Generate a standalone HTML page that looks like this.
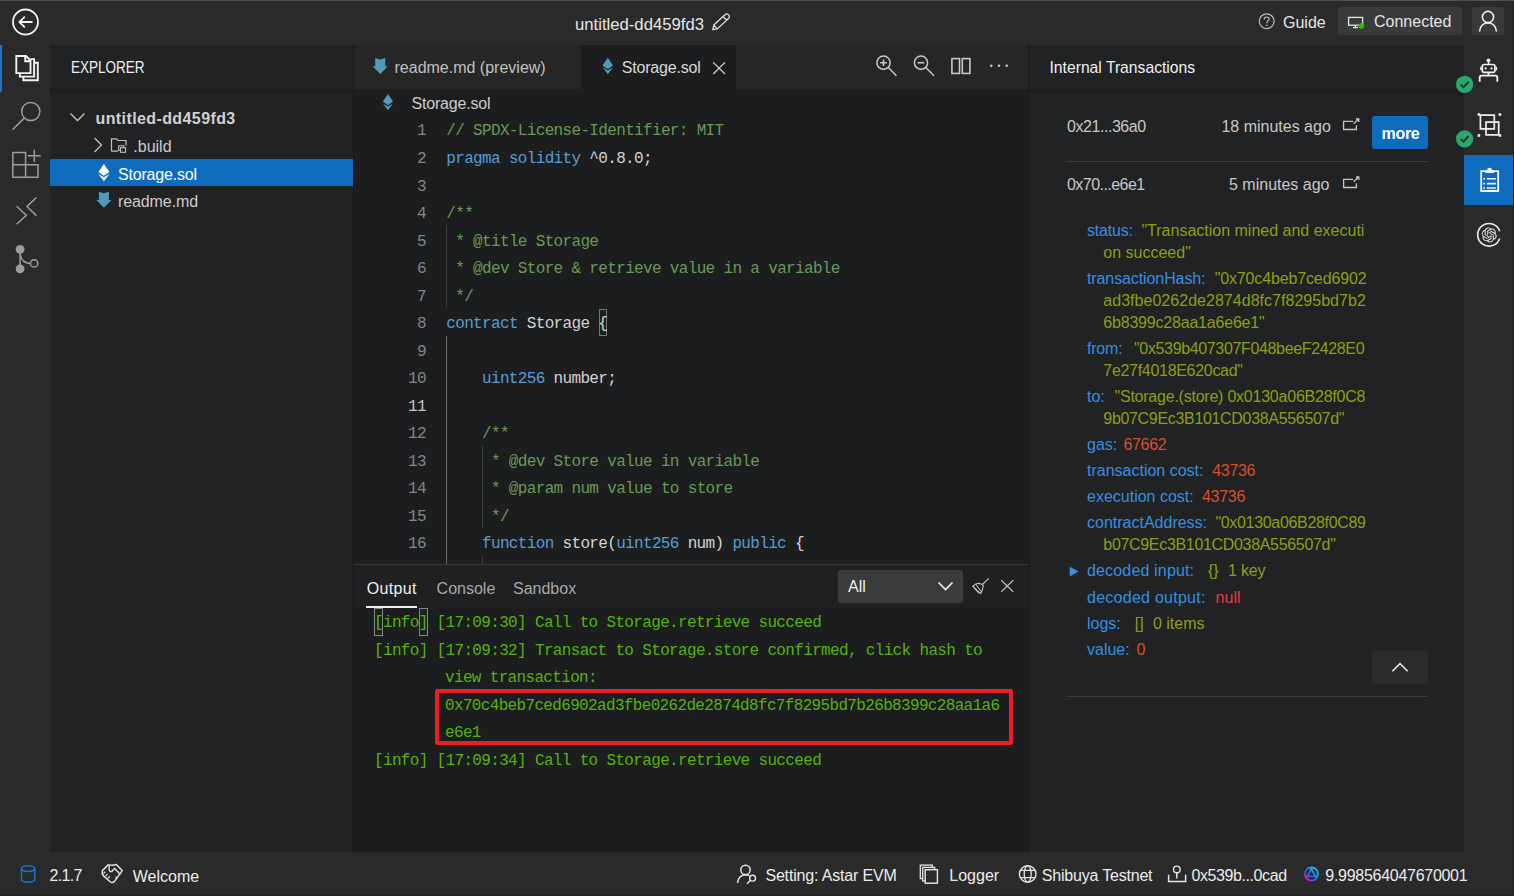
<!DOCTYPE html>
<html><head><meta charset="utf-8"><style>
html,body{margin:0;padding:0;width:1514px;height:896px;overflow:hidden;background:#2a2a2a}
body>div{position:absolute}
.t{white-space:pre;line-height:1}
svg.ic{position:absolute;left:0;top:0}
</style></head><body>
<div style="left:0px;top:0px;width:1514px;height:896px;background:#2a2a2a;"></div>
<div style="left:0px;top:0px;width:1514px;height:1px;background:#4f4f4f;"></div>
<div style="left:1513px;top:1px;width:1px;height:895px;background:#1f2022;"></div>
<div style="left:0px;top:895px;width:1514px;height:1px;background:#202123;"></div>
<div style="left:50px;top:45px;width:303px;height:807px;background:#212224;"></div>
<div style="left:50px;top:89px;width:303px;height:6px;background:linear-gradient(#1a1b1d,rgba(32,33,36,0));"></div>
<div style="left:353px;top:45px;width:1px;height:807px;background:#161718;"></div>
<div style="left:354px;top:45px;width:674px;height:807px;background:#1c1d1f;"></div>
<div style="left:354px;top:45px;width:674px;height:44px;background:#262626;"></div>
<div style="left:581px;top:45px;width:155px;height:44px;background:#1c1d1f;"></div>
<div style="left:354px;top:564px;width:674px;height:1px;background:#3a3a3a;"></div>
<div style="left:354px;top:565px;width:674px;height:43px;background:#1f2022;"></div>
<div style="left:354px;top:608px;width:674px;height:244px;background:#1c1d1f;"></div>
<div style="left:1028px;top:45px;width:1px;height:807px;background:#151617;"></div>
<div style="left:1029px;top:45px;width:435px;height:807px;background:#212224;"></div>
<div style="left:1029px;top:89px;width:435px;height:6px;background:linear-gradient(#1a1b1d,rgba(32,33,36,0));"></div>
<div style="left:1338px;top:7px;width:124px;height:28px;background:#393a3b;border-radius:3px"></div>
<div style="left:1472px;top:7px;width:32px;height:28px;background:#393a3b;border-radius:3px"></div>
<div style="left:0px;top:45px;width:2px;height:47px;background:#1a75d0;"></div>
<div style="left:50px;top:159px;width:303px;height:27px;background:#0f6cbd;"></div>
<div style="left:446px;top:336px;width:1px;height:228px;background:#6a6a6a;"></div>
<div style="left:446px;top:225px;width:1px;height:82px;background:#404040;"></div>
<div style="left:482px;top:446px;width:1px;height:82px;background:#404040;"></div>
<div style="left:482px;top:556px;width:1px;height:8px;background:#404040;"></div>
<div style="left:599px;top:309px;width:8px;height:27px;background:rgba(0,100,0,0.1);border:1px solid #777;box-sizing:border-box"></div>
<div style="left:366px;top:606px;width:51px;height:2px;background:#f0f0f0;"></div>
<div style="left:838px;top:570px;width:125px;height:33px;background:#3a3b3d;border-radius:3px"></div>
<div style="left:374px;top:608px;width:9px;height:28px;background:rgba(0,80,0,0.15);border:1px solid #888;box-sizing:border-box"></div>
<div style="left:419px;top:608px;width:9px;height:28px;background:rgba(0,80,0,0.15);border:1px solid #888;box-sizing:border-box"></div>
<div style="left:435px;top:689px;width:578.3px;height:56px;background:transparent;border:4.2px solid #ec1d25;box-sizing:border-box;border-radius:2.5px"></div>
<div style="left:1372px;top:116px;width:56px;height:33px;background:#0f6cbd;border-radius:3px"></div>
<div style="left:1067px;top:161px;width:361px;height:1px;background:#3c3d3f;"></div>
<div style="left:1372px;top:651px;width:56px;height:33px;background:#2b2b2b;border-radius:3px"></div>
<div style="left:1067px;top:696px;width:361px;height:1px;background:#3c3d3f;"></div>
<div style="left:1464px;top:155px;width:49px;height:50px;background:#0f6cbd;"></div>
<svg class="ic" width="1514" height="896" viewBox="0 0 1514 896">
<circle cx="25.5" cy="22" r="12.5" fill="none" stroke="#f2f2f2" stroke-width="1.8"/>
<path d="M32.5 22H19.5M24.8 16.6L19.4 22L24.8 27.4" fill="none" stroke="#f2f2f2" stroke-width="1.8" />
<g transform="translate(720.7,22.2) rotate(-43)"><path d="M-10.8 0L-7 -2.6H8.2A2.6 2.6 0 0 1 8.2 2.6H-7Z M-7 -2.6V2.6 M5.6 -2.6V2.6" fill="none" stroke="#e0e0e0" stroke-width="1.3" stroke-linejoin="round"/></g>
<circle cx="1266.7" cy="21.2" r="7.4" fill="none" stroke="#bdbdbd" stroke-width="1.2"/>
<path d="M1264.3 19.4C1264.3 17.9 1265.4 17 1266.7 17C1268 17 1269.1 17.9 1269.1 19.1C1269.1 20.8 1266.8 20.9 1266.8 23.2" fill="none" stroke="#bdbdbd" stroke-width="1.2" />
<circle cx="1266.8" cy="25.3" r="0.8" fill="#bdbdbd"/>
<rect x="1348.6" y="17.4" width="14" height="7.8" fill="none" stroke="#e6e6e6" stroke-width="1.3"/>
<path d="M1355.5 25.2V27.4M1353 27.6H1358" fill="none" stroke="#e6e6e6" stroke-width="1.3" />
<circle cx="1361.3" cy="25.8" r="2.9" fill="#33bb00"/>
<circle cx="1488" cy="17" r="5.6" fill="none" stroke="#eee" stroke-width="1.6"/>
<path d="M1479.5 31.5C1480 26 1483.5 23 1488 23C1492.5 23 1496 26 1496.5 31.5" fill="none" stroke="#eee" stroke-width="1.6" />
<path d="M16.3 56H26L30.5 60.5V73.1H16.3Z M25.2 56V61.3H30.5" fill="none" stroke="#f2f2f2" stroke-width="1.9" />
<path d="M19.9 73.1V76.6H34.1V59.1H30.5" fill="none" stroke="#f2f2f2" stroke-width="1.9" />
<path d="M23.4 76.6V80.3H37.8V62.8H34.1" fill="none" stroke="#f2f2f2" stroke-width="1.9" />
<circle cx="30.8" cy="111.5" r="9.1" fill="none" stroke="#9d9d9d" stroke-width="1.5"/>
<path d="M24.2 118.1L12.6 129.7" fill="none" stroke="#9d9d9d" stroke-width="1.5" />
<path d="M12.8 152.5H25.6V177.2H12.8Z M12.8 164.8H38V177.2H25.6" fill="none" stroke="#9d9d9d" stroke-width="1.5" />
<path d="M34.3 149.8V162.1M27.9 155.8H40.7" fill="none" stroke="#9d9d9d" stroke-width="1.5" />
<path d="M16.6 206.3L26.3 215.3L16.6 224.2" fill="none" stroke="#9d9d9d" stroke-width="1.5" />
<path d="M36.4 197.5L26.9 206.6L36.4 215.6" fill="none" stroke="#9d9d9d" stroke-width="1.5" />
<circle cx="20.1" cy="249.3" r="4.4" fill="#9d9d9d"/><circle cx="20.1" cy="268.9" r="4.4" fill="#9d9d9d"/><circle cx="34.1" cy="263.4" r="3.7" fill="none" stroke="#9d9d9d" stroke-width="1.5"/>
<path d="M20.1 250V268M20.1 254Q21.5 263.4 30.4 263.4" fill="none" stroke="#9d9d9d" stroke-width="1.5" />
<path d="M70.5 113.5L77.5 120.5L84.5 113.5" fill="none" stroke="#c8c8c8" stroke-width="1.3" />
<path d="M94.5 138L101.5 145L94.5 152" fill="none" stroke="#c0c0c0" stroke-width="1.3" />
<path d="M111.5 151.2V138.8H116.5L118 140.5H126V145.5 M111.5 151.2H118" fill="none" stroke="#c0c0c0" stroke-width="1.2" />
<rect x="118.7" y="145.8" width="5" height="4.6" fill="none" stroke="#c0c0c0" stroke-width="1.1"/><rect x="120.6" y="147.7" width="5" height="4.6" fill="#202124" stroke="#c0c0c0" stroke-width="1.1"/>
<path d="M103.9 164L109.4 172.084L103.9 175.868L98.4 172.084Z M98.4 173.976L103.9 177.244L109.4 173.976L103.9 181.2Z" fill="#ffffff"/>
<path d="M98.884 191.8L103.89999999999999 193.24L108.916 191.8V200.12H111.5L103.89999999999999 207.8L96.3 200.12H98.884Z" fill="#519aba"/>
<path d="M375.201 58L380.25 59.44L385.29900000000004 58V66.32H387.90000000000003L380.25 74L372.6 66.32H375.201Z" fill="#519aba"/>
<path d="M607.8 57.8L613.1 65.55499999999999L607.8 69.185L602.5 65.55499999999999Z M602.5 67.36999999999999L607.8 70.505L613.1 67.36999999999999L607.8 74.3Z" fill="#519aba"/>
<path d="M713.2 62.4L725 74M725 62.4L713.2 74" fill="none" stroke="#d0d0d0" stroke-width="1.3" />
<circle cx="883.5" cy="62.7" r="6.6" fill="none" stroke="#c8c8c8" stroke-width="1.5"/>
<path d="M888.3 67.5L896.5 75.7" fill="none" stroke="#c8c8c8" stroke-width="1.5" />
<path d="M880.2 62.7H886.8M883.5 59.4V66" fill="none" stroke="#c8c8c8" stroke-width="1.6" />
<circle cx="921" cy="62.7" r="6.6" fill="none" stroke="#c8c8c8" stroke-width="1.5"/>
<path d="M925.8 67.5L934 75.7" fill="none" stroke="#c8c8c8" stroke-width="1.5" />
<path d="M917.7 62.7H924.3" fill="none" stroke="#c8c8c8" stroke-width="1.6" />
<rect x="951.9" y="58.6" width="7.6" height="14.8" fill="none" stroke="#c8c8c8" stroke-width="1.6"/><rect x="962.3" y="58.6" width="7.6" height="14.8" fill="none" stroke="#c8c8c8" stroke-width="1.6"/>
<circle cx="991.3" cy="65.8" r="1.3" fill="#c8c8c8"/><circle cx="999" cy="65.8" r="1.3" fill="#c8c8c8"/><circle cx="1006.7" cy="65.8" r="1.3" fill="#c8c8c8"/>
<path d="M387.90000000000003 93.9L393.0 101.608L387.90000000000003 105.21600000000001L382.8 101.608Z M382.8 103.412L387.90000000000003 106.528L393.0 103.412L387.90000000000003 110.30000000000001Z" fill="#519aba"/>
<path d="M938.5 582.5L945.5 589.5L952.5 582.5" fill="none" stroke="#eeeeee" stroke-width="1.6" />
<path d="M982.8 584L988.8 578.4" fill="none" stroke="#bdbdbd" stroke-width="1.2" />
<path d="M972.8 586.4Q975.5 583.2 978.8 583.3Q982.5 583.8 983.3 585.8Q982.8 590 980.6 593.6Z" fill="none" stroke="#bdbdbd" stroke-width="1.2" />
<path d="M976.2 585L981.3 591.5M974.3 588L979 593" fill="none" stroke="#bdbdbd" stroke-width="1.1" />
<path d="M1001.2 580.2L1013.2 591.8M1013.2 580.2L1001.2 591.8" fill="none" stroke="#bdbdbd" stroke-width="1.2" />
<path d="M1353.1 121.4H1343.6V129.5H1356.4V125.2" fill="none" stroke="#c4c4c4" stroke-width="1.3" />
<path d="M1353.6 123.8L1358.8 119M1356 119H1358.8V121.9" fill="none" stroke="#c4c4c4" stroke-width="1.3" />
<path d="M1353.1 179.4H1343.6V187.5H1356.4V183.2" fill="none" stroke="#c4c4c4" stroke-width="1.3" />
<path d="M1353.6 181.8L1358.8 177M1356 177H1358.8V179.9" fill="none" stroke="#c4c4c4" stroke-width="1.3" />
<path d="M1069.7 566.8L1078.6 571.6L1069.7 576.4Z" fill="#368fe0" stroke="#368fe0" stroke-width="0" />
<path d="M1392.3 671.3L1400 663.6L1407.7 671.3" fill="none" stroke="#e8e8e8" stroke-width="1.6" />
<circle cx="1488.5" cy="60.3" r="1.9" fill="#f0f0f0"/>
<path d="M1488.5 61.5V64.3" fill="none" stroke="#f0f0f0" stroke-width="1.5" />
<rect x="1482.3" y="64.5" width="12.6" height="7.8" rx="1.8" fill="none" stroke="#f0f0f0" stroke-width="1.7"/>
<path d="M1481 66.8V70.2M1496.3 66.8V70.2" fill="none" stroke="#f0f0f0" stroke-width="1.6" />
<circle cx="1485.7" cy="68.4" r="1.1" fill="#f0f0f0"/><circle cx="1491.5" cy="68.4" r="1.1" fill="#f0f0f0"/>
<path d="M1488.5 72.3V75.5M1479.7 81.8V77.3Q1479.7 75.6 1481.4 75.6H1495.6Q1497.3 75.6 1497.3 77.3V81.8" fill="none" stroke="#f0f0f0" stroke-width="1.8" />
<path d="M1480.4 115.1H1494.3V128.8H1480.4Z" fill="none" stroke="#f0f0f0" stroke-width="1.7" />
<path d="M1486 122.2H1498.7V134.8H1486Z" fill="none" stroke="#f0f0f0" stroke-width="1.7" />
<rect x="1477.6" y="113.2" width="2.6" height="2.6" fill="#f0f0f0"/><rect x="1498.6" y="113.2" width="2.6" height="2.6" fill="#f0f0f0"/><rect x="1477.6" y="134.2" width="2.6" height="2.6" fill="#f0f0f0"/><rect x="1498.6" y="134.2" width="2.6" height="2.6" fill="#f0f0f0"/>
<circle cx="1464.6" cy="84.4" r="8.6" fill="#2aa86f"/>
<path d="M1460.6 84.60000000000001L1463.4 87.30000000000001L1468.6 81.80000000000001" fill="none" stroke="#1f2a24" stroke-width="1.7" />
<circle cx="1464.6" cy="138.8" r="8.6" fill="#2aa86f"/>
<path d="M1460.6 139.0L1463.4 141.70000000000002L1468.6 136.20000000000002" fill="none" stroke="#1f2a24" stroke-width="1.7" />
<path d="M1485.6 171.1H1481.2V191H1498.2V171.1H1493.5" fill="none" stroke="#f5f5f5" stroke-width="1.8" />
<path d="M1485.9 172.2V170.8H1487.7Q1487.8 168.4 1489.5 168.4Q1491.3 168.4 1491.4 170.8H1493.2V172.2Z" fill="#f5f5f5" stroke="#f5f5f5" stroke-width="1.5" />
<path d="M1483.3 178.7H1485M1486.8 178.7H1495.8M1483.3 183.6H1485M1486.8 183.6H1495.8M1483.3 188H1485M1486.8 188H1495.8" fill="none" stroke="#f5f5f5" stroke-width="1.6" />
<path d="M1499.7 231.2A11.3 11.3 0 1 0 1499.7 238.4" fill="none" stroke="#ececec" stroke-width="1.6"/>
<path transform="translate(1481.7,227.4) scale(0.625)" fill="#ececec" d="M22.2819 9.8211a5.9847 5.9847 0 0 0-.5157-4.9108 6.0462 6.0462 0 0 0-6.5098-2.9A6.0651 6.0651 0 0 0 4.9807 4.1818a5.9847 5.9847 0 0 0-3.9977 2.9 6.0462 6.0462 0 0 0 .7427 7.0966 5.98 5.98 0 0 0 .511 4.9107 6.051 6.051 0 0 0 6.5146 2.9001A5.9847 5.9847 0 0 0 13.2599 24a6.0557 6.0557 0 0 0 5.7718-4.2058 5.9894 5.9894 0 0 0 3.9977-2.9001 6.0557 6.0557 0 0 0-.7475-7.0729zm-9.022 12.6081a4.4755 4.4755 0 0 1-2.8764-1.0408l.1419-.0804 4.7783-2.7582a.7948.7948 0 0 0 .3927-.6813v-6.7369l2.02 1.1686a.071.071 0 0 1 .038.052v5.5826a4.504 4.504 0 0 1-4.4945 4.4944zm-9.6607-4.1254a4.4708 4.4708 0 0 1-.5346-3.0137l.142.0852 4.783 2.7582a.7712.7712 0 0 0 .7806 0l5.8428-3.3685v2.3324a.0804.0804 0 0 1-.0332.0615L9.74 19.9502a4.4992 4.4992 0 0 1-6.1408-1.6464zM2.3408 7.8956a4.485 4.485 0 0 1 2.3655-1.9728V11.6a.7664.7664 0 0 0 .3879.6765l5.8144 3.3543-2.0201 1.1685a.0757.0757 0 0 1-.071 0l-4.8303-2.7865A4.504 4.504 0 0 1 2.3408 7.872zm16.5963 3.8558L13.1038 8.364 15.1192 7.2a.0757.0757 0 0 1 .071 0l4.8303 2.7913a4.4944 4.4944 0 0 1-.6765 8.1042v-5.6772a.79.79 0 0 0-.407-.667zm2.0107-3.0231l-.142-.0852-4.7735-2.7818a.7759.7759 0 0 0-.7854 0L9.409 9.2297V6.8974a.0662.0662 0 0 1 .0284-.0615l4.8303-2.7866a4.4992 4.4992 0 0 1 6.6802 4.66zM8.3065 12.863l-2.02-1.1638a.0804.0804 0 0 1-.038-.0567V6.0742a4.4992 4.4992 0 0 1 7.3757-3.4537l-.142.0805L8.704 5.459a.7948.7948 0 0 0-.3927.6813zm1.0976-2.3654l2.602-1.4998 2.6069 1.4998v2.9994l-2.5974 1.4997-2.6067-1.4997Z"/>
<ellipse cx="28.1" cy="868.6" rx="6.6" ry="2.9" fill="none" stroke="#1b72d2" stroke-width="1.5"/>
<path d="M21.5 868.6V879.6C21.5 881.2 24.5 882.2 28.1 882.2C31.7 882.2 34.7 881.2 34.7 879.6V868.6" fill="none" stroke="#1b72d2" stroke-width="1.5" />
<path d="M102.4 870.6L108.4 864.6Q112.5 866 116.3 864.4L122.2 870.6L114.3 881.6Q112.3 883.3 110.4 882L103.2 875.6Q101.6 873.6 102.4 870.6Z" fill="none" stroke="#e0e0e0" stroke-width="1.5" stroke-linejoin="round"/>
<path d="M109.6 865.3Q108.3 868.2 109.6 871Q111.4 872.8 113.4 869.7L114.6 868.5L120.4 874.4" fill="none" stroke="#e0e0e0" stroke-width="1.4" />
<path d="M103.4 873.6L105.3 871.8M105.7 876L107.6 874.1M108 878.3L109.9 876.4M117.3 878.5L115.5 876.7" fill="none" stroke="#e0e0e0" stroke-width="1.3" />
<circle cx="745.5" cy="869.9" r="4.7" fill="none" stroke="#e6e6e6" stroke-width="1.5"/>
<path d="M737.5 883Q738.5 875.2 745.5 874.8Q747.6 874.8 749.4 875.6" fill="none" stroke="#e6e6e6" stroke-width="1.5" />
<circle cx="752.6" cy="878.2" r="2.9" fill="none" stroke="#e6e6e6" stroke-width="1.4"/>
<path d="M750.6 880.3L747 883.8" fill="none" stroke="#e6e6e6" stroke-width="1.5" />
<rect x="920.3" y="865.1" width="12" height="13.5" fill="none" stroke="#e6e6e6" stroke-width="1.3"/><rect x="922.7" y="867.4" width="12" height="13.6" fill="#2a2a2a" stroke="#e6e6e6" stroke-width="1.3"/><rect x="925.2" y="869.7" width="12.2" height="13.5" fill="#2a2a2a" stroke="#e6e6e6" stroke-width="1.4"/>
<circle cx="1027.7" cy="874" r="8.3" fill="none" stroke="#e6e6e6" stroke-width="1.4"/><ellipse cx="1027.7" cy="874" rx="3.5" ry="8.3" fill="none" stroke="#e6e6e6" stroke-width="1.3"/>
<path d="M1020 870.3H1035.4M1020 877.7H1035.4" fill="none" stroke="#e6e6e6" stroke-width="1.3" />
<circle cx="1176.8" cy="869.4" r="3.3" fill="none" stroke="#e6e6e6" stroke-width="1.4"/>
<path d="M1176.8 872.7V878.6M1168.6 874.8V881.5H1185.6V874.8" fill="none" stroke="#e6e6e6" stroke-width="1.5" />
<defs><linearGradient id="ag" gradientUnits="userSpaceOnUse" x1="1317" y1="867" x2="1305" y2="880"><stop offset="0" stop-color="#12e0ff"/><stop offset="0.55" stop-color="#1a6cff"/><stop offset="1" stop-color="#ff12a0"/></linearGradient></defs>
<g fill="none" stroke="url(#ag)" stroke-width="1.7"><circle cx="1311.4" cy="873.9" r="6.6"/><path d="M1311.4 867.6Q1312.6 873.2 1316.9 877.1Q1311.4 875.4 1305.9 877.1Q1310.2 873.2 1311.4 867.6Z"/></g>
</svg>
<div class="t" style="left:575px;top:16.86px;font-family:'Liberation Sans',sans-serif;font-size:16.7px;color:#e6e6e6;font-weight:400;">untitled-dd459fd3</div>
<div class="t" style="left:1283px;top:15.06px;font-family:'Liberation Sans',sans-serif;font-size:16px;color:#e6e6e6;font-weight:400;">Guide</div>
<div class="t" style="left:1374px;top:14.26px;font-family:'Liberation Sans',sans-serif;font-size:16px;color:#e6e6e6;font-weight:400;">Connected</div>
<div class="t" style="left:70.8px;top:59.66px;font-family:'Liberation Sans',sans-serif;font-size:16px;color:#f0f0f0;font-weight:400;transform:scaleX(0.845);transform-origin:0 0">EXPLORER</div>
<div class="t" style="left:95.5px;top:110.96px;font-family:'Liberation Sans',sans-serif;font-size:16px;color:#d0d0d0;font-weight:700;letter-spacing:0.4px">untitled-dd459fd3</div>
<div class="t" style="left:133.3px;top:138.76px;font-family:'Liberation Sans',sans-serif;font-size:16px;color:#cccccc;font-weight:400;">.build</div>
<div class="t" style="left:118px;top:167.26px;font-family:'Liberation Sans',sans-serif;font-size:16px;color:#ffffff;font-weight:400;letter-spacing:-0.2px">Storage.sol</div>
<div class="t" style="left:118px;top:193.66px;font-family:'Liberation Sans',sans-serif;font-size:16px;color:#cccccc;font-weight:400;letter-spacing:-0.1px">readme.md</div>
<div class="t" style="left:394.5px;top:59.96px;font-family:'Liberation Sans',sans-serif;font-size:16px;color:#c0c0c0;font-weight:400;">readme.md (preview)</div>
<div class="t" style="left:621.8px;top:59.96px;font-family:'Liberation Sans',sans-serif;font-size:16px;color:#d8d8d8;font-weight:400;letter-spacing:-0.2px">Storage.sol</div>
<div class="t" style="left:411.5px;top:96.26px;font-family:'Liberation Sans',sans-serif;font-size:16px;color:#cccccc;font-weight:400;letter-spacing:-0.2px">Storage.sol</div>
<div class="t" style="left:417.06px;top:123.44px;font-family:'Liberation Mono',monospace;font-size:16px;color:#858585;font-weight:400;letter-spacing:-0.66px">1</div>
<div class="t" style="left:446.3px;top:123.44px;font-family:'Liberation Mono',monospace;font-size:16px;color:#6a9955;font-weight:400;letter-spacing:-0.66px">// SPDX-License-Identifier: MIT</div>
<div class="t" style="left:417.06px;top:150.97px;font-family:'Liberation Mono',monospace;font-size:16px;color:#858585;font-weight:400;letter-spacing:-0.66px">2</div>
<div class="t" style="left:446.3px;top:150.97px;font-family:'Liberation Mono',monospace;font-size:16px;color:#569cd6;font-weight:400;letter-spacing:-0.66px">pragma</div>
<div class="t" style="left:508.88px;top:150.97px;font-family:'Liberation Mono',monospace;font-size:16px;color:#569cd6;font-weight:400;letter-spacing:-0.66px">solidity</div>
<div class="t" style="left:589.34px;top:150.97px;font-family:'Liberation Mono',monospace;font-size:16px;color:#d4d4d4;font-weight:400;letter-spacing:-0.66px">^0.8.0;</div>
<div class="t" style="left:417.06px;top:178.50px;font-family:'Liberation Mono',monospace;font-size:16px;color:#858585;font-weight:400;letter-spacing:-0.66px">3</div>
<div class="t" style="left:417.06px;top:206.03px;font-family:'Liberation Mono',monospace;font-size:16px;color:#858585;font-weight:400;letter-spacing:-0.66px">4</div>
<div class="t" style="left:446.3px;top:206.03px;font-family:'Liberation Mono',monospace;font-size:16px;color:#6a9955;font-weight:400;letter-spacing:-0.66px">/**</div>
<div class="t" style="left:417.06px;top:233.56px;font-family:'Liberation Mono',monospace;font-size:16px;color:#858585;font-weight:400;letter-spacing:-0.66px">5</div>
<div class="t" style="left:446.3px;top:233.56px;font-family:'Liberation Mono',monospace;font-size:16px;color:#6a9955;font-weight:400;letter-spacing:-0.66px"> * @title Storage</div>
<div class="t" style="left:417.06px;top:261.09px;font-family:'Liberation Mono',monospace;font-size:16px;color:#858585;font-weight:400;letter-spacing:-0.66px">6</div>
<div class="t" style="left:446.3px;top:261.09px;font-family:'Liberation Mono',monospace;font-size:16px;color:#6a9955;font-weight:400;letter-spacing:-0.66px"> * @dev Store &amp; retrieve value in a variable</div>
<div class="t" style="left:417.06px;top:288.62px;font-family:'Liberation Mono',monospace;font-size:16px;color:#858585;font-weight:400;letter-spacing:-0.66px">7</div>
<div class="t" style="left:446.3px;top:288.62px;font-family:'Liberation Mono',monospace;font-size:16px;color:#6a9955;font-weight:400;letter-spacing:-0.66px"> */</div>
<div class="t" style="left:417.06px;top:316.15px;font-family:'Liberation Mono',monospace;font-size:16px;color:#858585;font-weight:400;letter-spacing:-0.66px">8</div>
<div class="t" style="left:446.3px;top:316.15px;font-family:'Liberation Mono',monospace;font-size:16px;color:#569cd6;font-weight:400;letter-spacing:-0.66px">contract</div>
<div class="t" style="left:526.76px;top:316.15px;font-family:'Liberation Mono',monospace;font-size:16px;color:#d4d4d4;font-weight:400;letter-spacing:-0.66px">Storage</div>
<div class="t" style="left:598.28px;top:316.15px;font-family:'Liberation Mono',monospace;font-size:16px;color:#d4d4d4;font-weight:400;letter-spacing:-0.66px">{</div>
<div class="t" style="left:417.06px;top:343.68px;font-family:'Liberation Mono',monospace;font-size:16px;color:#858585;font-weight:400;letter-spacing:-0.66px">9</div>
<div class="t" style="left:408.12px;top:371.21px;font-family:'Liberation Mono',monospace;font-size:16px;color:#858585;font-weight:400;letter-spacing:-0.66px">10</div>
<div class="t" style="left:482.06px;top:371.21px;font-family:'Liberation Mono',monospace;font-size:16px;color:#569cd6;font-weight:400;letter-spacing:-0.66px">uint256</div>
<div class="t" style="left:553.58px;top:371.21px;font-family:'Liberation Mono',monospace;font-size:16px;color:#d4d4d4;font-weight:400;letter-spacing:-0.66px">number;</div>
<div class="t" style="left:408.12px;top:398.74px;font-family:'Liberation Mono',monospace;font-size:16px;color:#c6c6c6;font-weight:400;letter-spacing:-0.66px">11</div>
<div class="t" style="left:408.12px;top:426.27px;font-family:'Liberation Mono',monospace;font-size:16px;color:#858585;font-weight:400;letter-spacing:-0.66px">12</div>
<div class="t" style="left:482.06px;top:426.27px;font-family:'Liberation Mono',monospace;font-size:16px;color:#6a9955;font-weight:400;letter-spacing:-0.66px">/**</div>
<div class="t" style="left:408.12px;top:453.80px;font-family:'Liberation Mono',monospace;font-size:16px;color:#858585;font-weight:400;letter-spacing:-0.66px">13</div>
<div class="t" style="left:482.06px;top:453.80px;font-family:'Liberation Mono',monospace;font-size:16px;color:#6a9955;font-weight:400;letter-spacing:-0.66px"> * @dev Store value in variable</div>
<div class="t" style="left:408.12px;top:481.33px;font-family:'Liberation Mono',monospace;font-size:16px;color:#858585;font-weight:400;letter-spacing:-0.66px">14</div>
<div class="t" style="left:482.06px;top:481.33px;font-family:'Liberation Mono',monospace;font-size:16px;color:#6a9955;font-weight:400;letter-spacing:-0.66px"> * @param num value to store</div>
<div class="t" style="left:408.12px;top:508.86px;font-family:'Liberation Mono',monospace;font-size:16px;color:#858585;font-weight:400;letter-spacing:-0.66px">15</div>
<div class="t" style="left:482.06px;top:508.86px;font-family:'Liberation Mono',monospace;font-size:16px;color:#6a9955;font-weight:400;letter-spacing:-0.66px"> */</div>
<div class="t" style="left:408.12px;top:536.39px;font-family:'Liberation Mono',monospace;font-size:16px;color:#858585;font-weight:400;letter-spacing:-0.66px">16</div>
<div class="t" style="left:482.06px;top:536.39px;font-family:'Liberation Mono',monospace;font-size:16px;color:#569cd6;font-weight:400;letter-spacing:-0.66px">function</div>
<div class="t" style="left:562.52px;top:536.39px;font-family:'Liberation Mono',monospace;font-size:16px;color:#d4d4d4;font-weight:400;letter-spacing:-0.66px">store(</div>
<div class="t" style="left:616.16px;top:536.39px;font-family:'Liberation Mono',monospace;font-size:16px;color:#569cd6;font-weight:400;letter-spacing:-0.66px">uint256</div>
<div class="t" style="left:687.6800000000001px;top:536.39px;font-family:'Liberation Mono',monospace;font-size:16px;color:#d4d4d4;font-weight:400;letter-spacing:-0.66px">num)</div>
<div class="t" style="left:732.38px;top:536.39px;font-family:'Liberation Mono',monospace;font-size:16px;color:#569cd6;font-weight:400;letter-spacing:-0.66px">public</div>
<div class="t" style="left:794.96px;top:536.39px;font-family:'Liberation Mono',monospace;font-size:16px;color:#d4d4d4;font-weight:400;letter-spacing:-0.66px">{</div>
<div class="t" style="left:366.8px;top:580.76px;font-family:'Liberation Sans',sans-serif;font-size:16px;color:#f0f0f0;font-weight:400;letter-spacing:0.3px">Output</div>
<div class="t" style="left:436.6px;top:580.76px;font-family:'Liberation Sans',sans-serif;font-size:16px;color:#a8a8a8;font-weight:400;">Console</div>
<div class="t" style="left:513px;top:580.76px;font-family:'Liberation Sans',sans-serif;font-size:16px;color:#a8a8a8;font-weight:400;">Sandbox</div>
<div class="t" style="left:848px;top:578.96px;font-family:'Liberation Sans',sans-serif;font-size:16px;color:#f0f0f0;font-weight:400;">All</div>
<div class="t" style="left:374px;top:615.24px;font-family:'Liberation Mono',monospace;font-size:16px;color:#55b20a;font-weight:400;letter-spacing:-0.66px">[info] [17:09:30] Call to Storage.retrieve succeed</div>
<div class="t" style="left:374px;top:642.74px;font-family:'Liberation Mono',monospace;font-size:16px;color:#55b20a;font-weight:400;letter-spacing:-0.66px">[info] [17:09:32] Transact to Storage.store confirmed, click hash to</div>
<div class="t" style="left:445px;top:670.24px;font-family:'Liberation Mono',monospace;font-size:16px;color:#55b20a;font-weight:400;letter-spacing:-0.66px">view transaction:</div>
<div class="t" style="left:445px;top:697.74px;font-family:'Liberation Mono',monospace;font-size:16px;color:#55b20a;font-weight:400;letter-spacing:-0.66px">0x70c4beb7ced6902ad3fbe0262de2874d8fc7f8295bd7b26b8399c28aa1a6</div>
<div class="t" style="left:445px;top:725.24px;font-family:'Liberation Mono',monospace;font-size:16px;color:#55b20a;font-weight:400;letter-spacing:-0.66px">e6e1</div>
<div class="t" style="left:374px;top:752.74px;font-family:'Liberation Mono',monospace;font-size:16px;color:#55b20a;font-weight:400;letter-spacing:-0.66px">[info] [17:09:34] Call to Storage.retrieve succeed</div>
<div class="t" style="left:1049.5px;top:60.01px;font-family:'Liberation Sans',sans-serif;font-size:15.7px;color:#f0f0f0;font-weight:400;">Internal Transactions</div>
<div class="t" style="left:1067px;top:119.06px;font-family:'Liberation Sans',sans-serif;font-size:16px;color:#c8c8c8;font-weight:400;letter-spacing:-0.45px">0x21...36a0</div>
<div class="t" style="left:1221.4px;top:119.06px;font-family:'Liberation Sans',sans-serif;font-size:16px;color:#c8c8c8;font-weight:400;">18 minutes ago</div>
<div class="t" style="left:1381.5px;top:126.26px;font-family:'Liberation Sans',sans-serif;font-size:16px;color:#ffffff;font-weight:700;letter-spacing:-0.3px">more</div>
<div class="t" style="left:1067px;top:177.46px;font-family:'Liberation Sans',sans-serif;font-size:16px;color:#c8c8c8;font-weight:400;letter-spacing:-0.55px">0x70...e6e1</div>
<div class="t" style="left:1229px;top:177.46px;font-family:'Liberation Sans',sans-serif;font-size:16px;color:#c8c8c8;font-weight:400;">5 minutes ago</div>
<div class="t" style="left:1087px;top:222.96px;font-family:'Liberation Sans',sans-serif;font-size:16px;color:#368fe0;font-weight:400;letter-spacing:-0.2px">status:</div>
<div class="t" style="left:1141.4px;top:222.96px;font-family:'Liberation Sans',sans-serif;font-size:16px;color:#8c9f18;font-weight:400;letter-spacing:0px">&quot;Transaction mined and executi</div>
<div class="t" style="left:1103.3px;top:244.96px;font-family:'Liberation Sans',sans-serif;font-size:16px;color:#8c9f18;font-weight:400;letter-spacing:0px">on succeed&quot;</div>
<div class="t" style="left:1087px;top:270.66px;font-family:'Liberation Sans',sans-serif;font-size:16px;color:#368fe0;font-weight:400;letter-spacing:-0.1px">transactionHash:</div>
<div class="t" style="left:1214.7px;top:270.66px;font-family:'Liberation Sans',sans-serif;font-size:16px;color:#8c9f18;font-weight:400;letter-spacing:-0.14px">&quot;0x70c4beb7ced6902</div>
<div class="t" style="left:1103.3px;top:292.66px;font-family:'Liberation Sans',sans-serif;font-size:16px;color:#8c9f18;font-weight:400;letter-spacing:0.03px">ad3fbe0262de2874d8fc7f8295bd7b2</div>
<div class="t" style="left:1103.3px;top:314.66px;font-family:'Liberation Sans',sans-serif;font-size:16px;color:#8c9f18;font-weight:400;letter-spacing:-0.2px">6b8399c28aa1a6e6e1&quot;</div>
<div class="t" style="left:1087px;top:340.96px;font-family:'Liberation Sans',sans-serif;font-size:16px;color:#368fe0;font-weight:400;letter-spacing:-0.2px">from:</div>
<div class="t" style="left:1134px;top:340.96px;font-family:'Liberation Sans',sans-serif;font-size:16px;color:#8c9f18;font-weight:400;letter-spacing:-0.35px">&quot;0x539b407307F048beeF2428E0</div>
<div class="t" style="left:1103.3px;top:362.96px;font-family:'Liberation Sans',sans-serif;font-size:16px;color:#8c9f18;font-weight:400;letter-spacing:-0.3px">7e27f4018E620cad&quot;</div>
<div class="t" style="left:1087px;top:388.96px;font-family:'Liberation Sans',sans-serif;font-size:16px;color:#368fe0;font-weight:400;letter-spacing:0px">to:</div>
<div class="t" style="left:1114.5px;top:388.96px;font-family:'Liberation Sans',sans-serif;font-size:16px;color:#8c9f18;font-weight:400;letter-spacing:-0.23px">&quot;Storage.(store) 0x0130a06B28f0C8</div>
<div class="t" style="left:1103.3px;top:410.96px;font-family:'Liberation Sans',sans-serif;font-size:16px;color:#8c9f18;font-weight:400;letter-spacing:-0.32px">9b07C9Ec3B101CD038A556507d&quot;</div>
<div class="t" style="left:1087px;top:436.66px;font-family:'Liberation Sans',sans-serif;font-size:16px;color:#368fe0;font-weight:400;letter-spacing:0px">gas:</div>
<div class="t" style="left:1123.4px;top:436.66px;font-family:'Liberation Sans',sans-serif;font-size:16px;color:#d5512b;font-weight:400;letter-spacing:-0.3px">67662</div>
<div class="t" style="left:1087px;top:462.66px;font-family:'Liberation Sans',sans-serif;font-size:16px;color:#368fe0;font-weight:400;letter-spacing:0px">transaction cost:</div>
<div class="t" style="left:1212.2px;top:462.66px;font-family:'Liberation Sans',sans-serif;font-size:16px;color:#d5512b;font-weight:400;letter-spacing:-0.3px">43736</div>
<div class="t" style="left:1087px;top:488.66px;font-family:'Liberation Sans',sans-serif;font-size:16px;color:#368fe0;font-weight:400;letter-spacing:0px">execution cost:</div>
<div class="t" style="left:1202px;top:488.66px;font-family:'Liberation Sans',sans-serif;font-size:16px;color:#d5512b;font-weight:400;letter-spacing:-0.3px">43736</div>
<div class="t" style="left:1087px;top:514.66px;font-family:'Liberation Sans',sans-serif;font-size:16px;color:#368fe0;font-weight:400;letter-spacing:0px">contractAddress:</div>
<div class="t" style="left:1215.4px;top:514.66px;font-family:'Liberation Sans',sans-serif;font-size:16px;color:#8c9f18;font-weight:400;letter-spacing:-0.32px">&quot;0x0130a06B28f0C89</div>
<div class="t" style="left:1103.3px;top:536.66px;font-family:'Liberation Sans',sans-serif;font-size:16px;color:#8c9f18;font-weight:400;letter-spacing:-0.32px">b07C9Ec3B101CD038A556507d&quot;</div>
<div class="t" style="left:1087px;top:562.66px;font-family:'Liberation Sans',sans-serif;font-size:16px;color:#368fe0;font-weight:400;letter-spacing:0.16px">decoded input:</div>
<div class="t" style="left:1208px;top:562.66px;font-family:'Liberation Sans',sans-serif;font-size:16px;color:#8c9f18;font-weight:400;letter-spacing:0px">{}</div>
<div class="t" style="left:1228px;top:562.66px;font-family:'Liberation Sans',sans-serif;font-size:16px;color:#8c9f18;font-weight:400;letter-spacing:-0.2px">1 key</div>
<div class="t" style="left:1087px;top:590.16px;font-family:'Liberation Sans',sans-serif;font-size:16px;color:#368fe0;font-weight:400;letter-spacing:0.26px">decoded output:</div>
<div class="t" style="left:1215.6px;top:590.16px;font-family:'Liberation Sans',sans-serif;font-size:16px;color:#e23c3c;font-weight:400;letter-spacing:0px">null</div>
<div class="t" style="left:1087px;top:616.16px;font-family:'Liberation Sans',sans-serif;font-size:16px;color:#368fe0;font-weight:400;letter-spacing:0px">logs:</div>
<div class="t" style="left:1134.8px;top:616.16px;font-family:'Liberation Sans',sans-serif;font-size:16px;color:#8c9f18;font-weight:400;letter-spacing:0px">[]</div>
<div class="t" style="left:1152.9px;top:616.16px;font-family:'Liberation Sans',sans-serif;font-size:16px;color:#8c9f18;font-weight:400;letter-spacing:0px">0 items</div>
<div class="t" style="left:1087px;top:641.96px;font-family:'Liberation Sans',sans-serif;font-size:16px;color:#368fe0;font-weight:400;letter-spacing:0px">value:</div>
<div class="t" style="left:1136.6px;top:641.96px;font-family:'Liberation Sans',sans-serif;font-size:16px;color:#d5512b;font-weight:400;letter-spacing:0px">0</div>
<div class="t" style="left:49.5px;top:868.06px;font-family:'Liberation Sans',sans-serif;font-size:16px;color:#ececec;font-weight:400;letter-spacing:-0.7px">2.1.7</div>
<div class="t" style="left:132.8px;top:868.66px;font-family:'Liberation Sans',sans-serif;font-size:16px;color:#ececec;font-weight:400;">Welcome</div>
<div class="t" style="left:765.4px;top:868.46px;font-family:'Liberation Sans',sans-serif;font-size:16px;color:#ececec;font-weight:400;letter-spacing:-0.17px">Setting: Astar EVM</div>
<div class="t" style="left:949.3px;top:868.46px;font-family:'Liberation Sans',sans-serif;font-size:16px;color:#ececec;font-weight:400;">Logger</div>
<div class="t" style="left:1041.8px;top:868.46px;font-family:'Liberation Sans',sans-serif;font-size:16px;color:#ececec;font-weight:400;letter-spacing:-0.2px">Shibuya Testnet</div>
<div class="t" style="left:1191.4px;top:868.46px;font-family:'Liberation Sans',sans-serif;font-size:16px;color:#ececec;font-weight:400;letter-spacing:-0.4px">0x539b...0cad</div>
<div class="t" style="left:1325.3px;top:868.46px;font-family:'Liberation Sans',sans-serif;font-size:16px;color:#ececec;font-weight:400;letter-spacing:-0.28px">9.998564047670001</div>
</body></html>
